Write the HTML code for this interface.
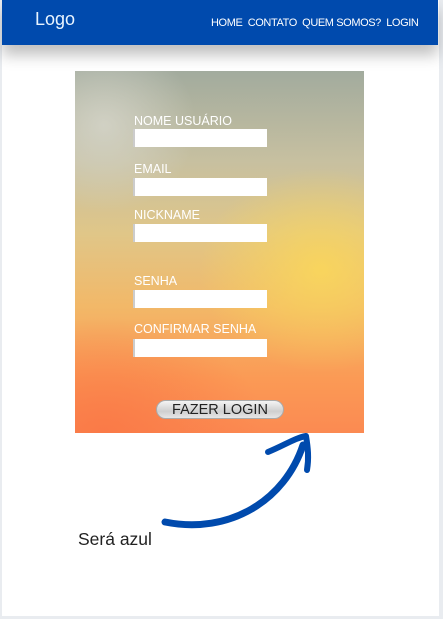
<!DOCTYPE html>
<html><head><meta charset="utf-8"><style>
body{margin:0;width:443px;height:619px;background:#e9ecf0;font-family:"Liberation Sans",sans-serif;overflow:hidden;position:relative}
.wrap{position:absolute;left:2px;top:0;width:437px;height:616px;background:#fff}
.hdr{position:absolute;left:0;top:0;width:436px;height:45px;background:#004aad;box-shadow:0 10px 14px rgba(0,0,0,.25)}
.logo{position:absolute;left:33px;top:9px;color:#e8f4ff;font-size:18px}
.nav{position:absolute;left:209px;top:17px;color:#fff;font-size:11px;letter-spacing:-.4px}
.card{position:absolute;left:75px;top:71px;width:289px;height:362px;
background:
radial-gradient(ellipse 40% 30% at 10% 15%,rgba(215,215,205,.8),rgba(215,215,205,0) 80%),
radial-gradient(ellipse 60% 40% at 85% 55%,rgba(250,215,90,.9),rgba(250,215,90,0) 70%),
radial-gradient(ellipse 70% 40% at 10% 100%,rgba(250,120,70,.9),rgba(250,120,70,0) 80%),
linear-gradient(180deg,#a2ab9e 0%,#c7c0a0 25%,#e0c688 45%,#f2b868 65%,#fb9a55 85%,#fb8a52 100%)}
.l{position:absolute;color:#fff;font-size:12.5px;left:59px}
.i{position:absolute;left:58px;width:134px;height:18px;background:#fff;border-left:2px solid #ccc;box-sizing:border-box}
.btn{position:absolute;left:81px;top:329px;width:128px;height:19px;border-radius:10px;background:linear-gradient(#f4f4f4,#cfcfcf 60%,#e6e6e6);border:1px solid #aaa;box-sizing:border-box;text-align:center;font-size:14.5px;line-height:18px;color:#222}
.s{position:absolute;left:78px;top:529px;font-size:17.5px;color:#222}
</style></head><body>
<div class="wrap">
<div class="hdr"><div class="logo">Logo</div><div class="nav">HOME&nbsp; CONTATO&nbsp; QUEM SOMOS?&nbsp; LOGIN</div></div>
</div>
<div class="card">
<div class="l" style="top:43px">NOME USUÁRIO</div><div class="i" style="top:58px"></div>
<div class="l" style="top:91px">EMAIL</div><div class="i" style="top:107px"></div>
<div class="l" style="top:137px">NICKNAME</div><div class="i" style="top:153px"></div>
<div class="l" style="top:203px">SENHA</div><div class="i" style="top:219px"></div>
<div class="l" style="top:251px">CONFIRMAR SENHA</div><div class="i" style="top:268px"></div>
<div class="btn">FAZER LOGIN</div>
</div>
<svg style="position:absolute;left:0;top:0" width="443" height="619">
<path d="M165 522 C230 535 285 500 303 445" stroke="#004aad" stroke-width="7" fill="none" stroke-linecap="round"/>
<path d="M268 452 C285 445 295 438 306 436 C308 448 309 458 307 470" stroke="#004aad" stroke-width="6" fill="none" stroke-linecap="round" stroke-linejoin="round"/>
</svg>
<div class="s">Será azul</div>
</body></html>
